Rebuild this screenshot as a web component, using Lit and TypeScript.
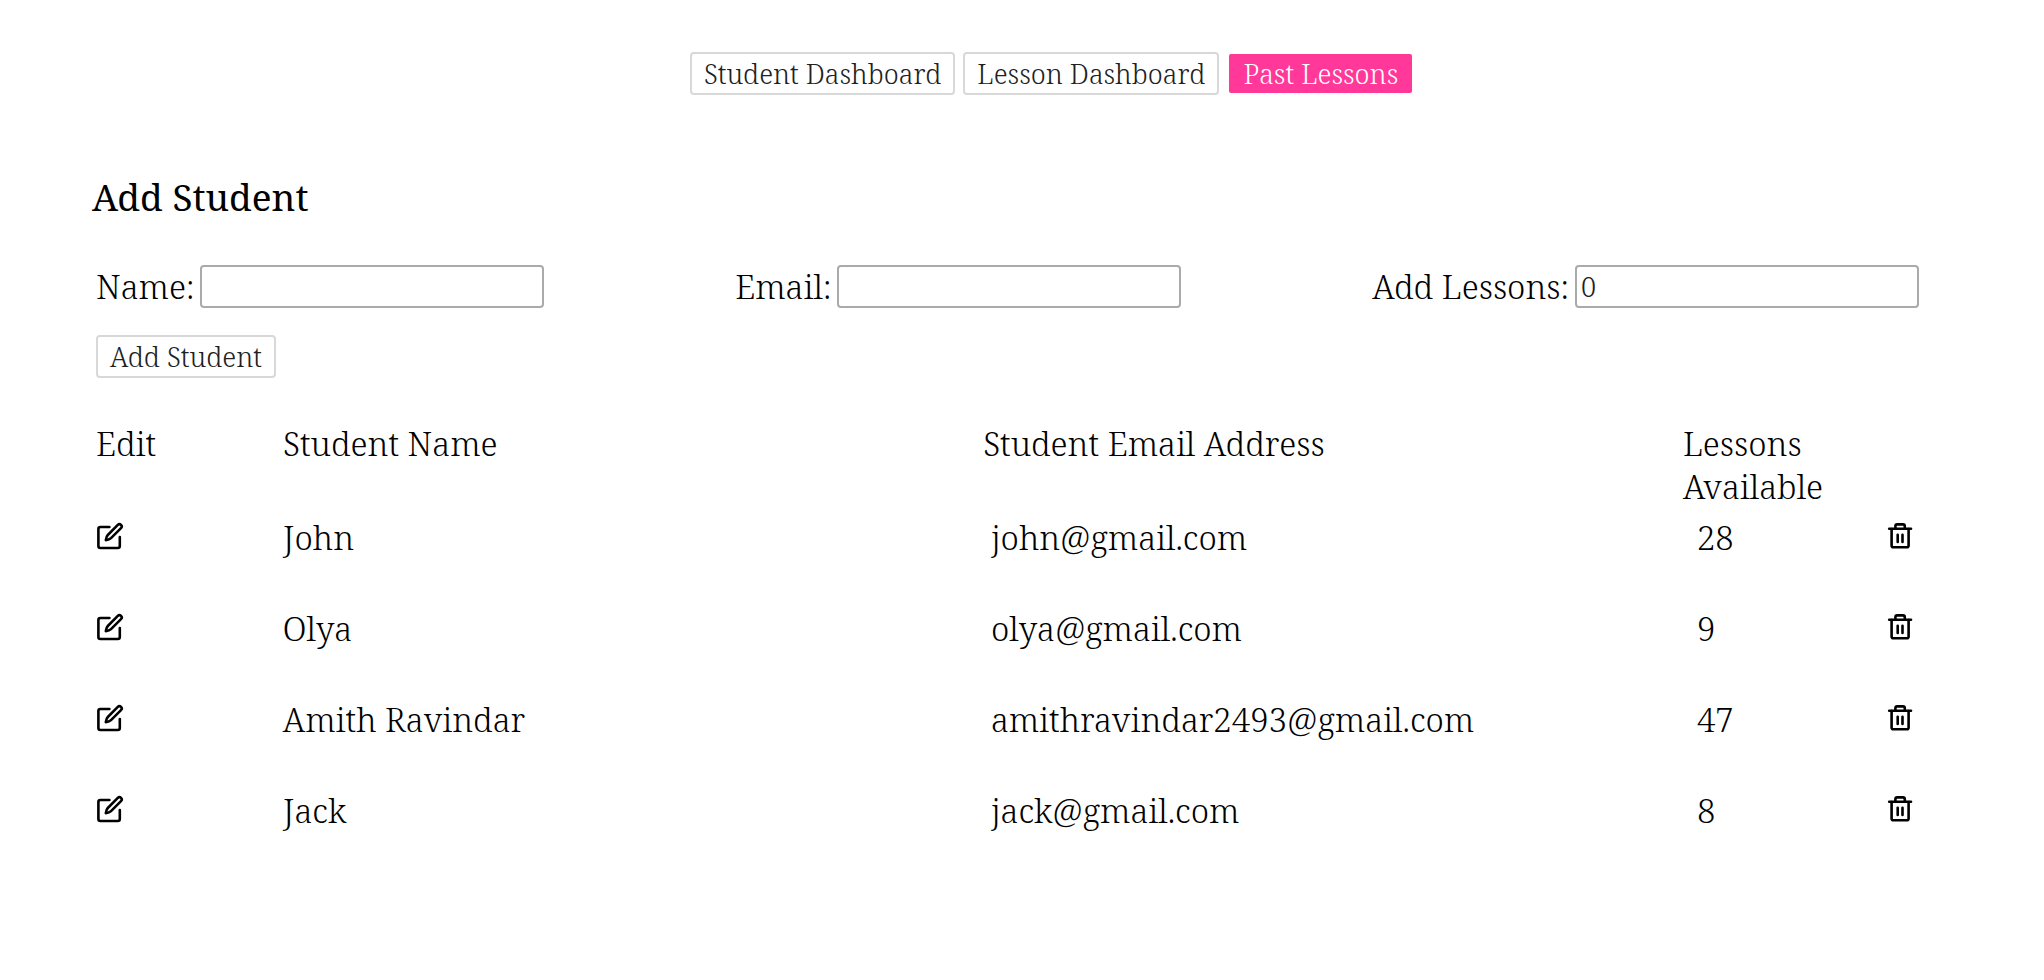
import { LitElement, html, css, svg } from "lit";
import { customElement, state } from "lit/decorators.js";

interface Student {
  name: string;
  email: string;
  lessons: number;
}

const editIcon = html`<svg class="icon" viewBox="0 0 28 28" aria-hidden="true">${svg`
  <path d="M13.4 5H4.4a2 2 0 0 0-2 2v17a2 2 0 0 0 2 2h17.4a2 2 0 0 0 2-2V15" />
  <path d="M21.8 2.9a2.1 2.1 0 0 1 3.2 3.2L15 16.2Q13.4 17.8 9.8 18.2Q10.2 14.6 11.8 13Z" />`}</svg>`;

const trashIcon = html`<svg class="icon" viewBox="0 0 28 28" aria-hidden="true">${svg`
  <path d="M3.2 6.8H25" />
  <path d="M9.4 6.6V4.2a1.8 1.8 0 0 1 1.8-1.8h5.8a1.8 1.8 0 0 1 1.8 1.8v2.4" />
  <path d="M5.6 7v16.4a1.8 1.8 0 0 0 1.8 1.8h13.4a1.8 1.8 0 0 0 1.8-1.8V7" />
  <path d="M11.7 12.8v7.2M16.5 12.8v7.2" />`}</svg>`;

@customElement("app-root")
export class AppRoot extends LitElement {
  @state() private students: Student[] = [
    { name: "John", email: "john@gmail.com", lessons: 28 },
    { name: "Olya", email: "olya@gmail.com", lessons: 9 },
    { name: "Amith Ravindar", email: "amithravindar2493@gmail.com", lessons: 47 },
    { name: "Jack", email: "jack@gmail.com", lessons: 8 },
  ];

  static styles = css`
    :host {
      display: block;
      background: #fff;
      color: #000;
      font-family: "Roboto Slab", "Noto Serif", "DejaVu Serif Condensed", serif;
      font-size: 33px;
      font-weight: 300;
      line-height: 43px;
    }
    * {
      box-sizing: border-box;
    }
    .nav {
      display: flex;
      justify-content: center;
      gap: 8px;
      padding: 52px 0 0 60px;
    }
    .button {
      height: 43px;
      padding: 0 12px;
      border: 2px solid #d8d8d8;
      border-radius: 4px;
      background: #fff;
      background-clip: padding-box;
      color: #212121;
      font: inherit;
      font-size: 27px;
      line-height: 39px;
      white-space: nowrap;
      cursor: pointer;
    }
    .button.accent {
      padding: 0 14px;
      border-color: transparent;
      background-color: #ff3899;
      color: #fff;
    }
    .content {
      padding: 78px 125px 48px 96px;
    }
    .title {
      margin: 0 0 44px -4px;
      font-size: 37px;
      font-weight: 400;
      line-height: 48px;
    }
    .fields {
      display: flex;
      justify-content: space-between;
      gap: 24px;
      margin-bottom: 27px;
    }
    .field {
      display: flex;
      align-items: center;
      gap: 6px;
      white-space: nowrap;
    }
    .input {
      width: 344px;
      height: 43px;
      padding: 0 4px;
      border: 2px solid #aaa;
      border-radius: 4px;
      background: #fff;
      color: #212121;
      font: inherit;
      font-size: 27px;
    }
    .submit {
      display: block;
    }
    .table {
      width: 100%;
      margin-top: 44px;
      border-collapse: collapse;
      table-layout: fixed;
    }
    .table th,
    .table td {
      padding: 0;
      text-align: left;
      vertical-align: top;
      font-weight: inherit;
    }
    .table td {
      height: 91px;
      padding-top: 8px;
    }
    .table .email {
      padding-left: 8px;
    }
    .table .lessons {
      padding-left: 14px;
    }
    .col-edit {
      width: 10.25%;
    }
    .col-wide {
      width: 38.4%;
    }
    .col-lessons {
      width: 11%;
    }
    .icon-button {
      display: block;
      margin-top: 6px;
      padding: 0;
      border: 0;
      background: none;
      color: inherit;
      cursor: pointer;
    }
    .delete .icon-button {
      margin-left: auto;
      margin-right: 5px;
    }
    .icon {
      display: block;
      width: 28px;
      height: 28px;
      fill: none;
      stroke: currentColor;
      stroke-width: 2.6;
      stroke-linecap: round;
      stroke-linejoin: round;
    }
  `;

  render() {
    return html`
      <nav class="nav">
        <button class="button" type="button">Student Dashboard</button>
        <button class="button" type="button">Lesson Dashboard</button>
        <button class="button accent" type="button">Past Lessons</button>
      </nav>
      <main class="content">
        <h2 class="title">Add Student</h2>
        <form @submit=${(e: Event) => e.preventDefault()}>
          <div class="fields">
            <div class="field">
              <label for="name">Name:</label>
              <input class="input" id="name" type="text" />
            </div>
            <div class="field">
              <label for="email">Email:</label>
              <input class="input" id="email" type="email" />
            </div>
            <div class="field">
              <label for="lessons">Add Lessons:</label>
              <input class="input" id="lessons" type="number" min="0" value="0" />
            </div>
          </div>
          <button class="button submit" type="submit">Add Student</button>
        </form>
        <table class="table">
          <colgroup>
            <col class="col-edit" />
            <col class="col-wide" />
            <col class="col-wide" />
            <col class="col-lessons" />
            <col />
          </colgroup>
          <thead>
            <tr>
              <th scope="col">Edit</th>
              <th scope="col">Student Name</th>
              <th scope="col">Student Email Address</th>
              <th scope="col">Lessons Available</th>
              <th></th>
            </tr>
          </thead>
          <tbody>
            ${this.students.map(
              (s) => html`
                <tr>
                  <td>
                    <button class="icon-button" type="button" aria-label="Edit">${editIcon}</button>
                  </td>
                  <td>${s.name}</td>
                  <td class="email">${s.email}</td>
                  <td class="lessons">${s.lessons}</td>
                  <td class="delete">
                    <button class="icon-button" type="button" aria-label="Delete">${trashIcon}</button>
                  </td>
                </tr>
              `
            )}
          </tbody>
        </table>
      </main>
    `;
  }
}
